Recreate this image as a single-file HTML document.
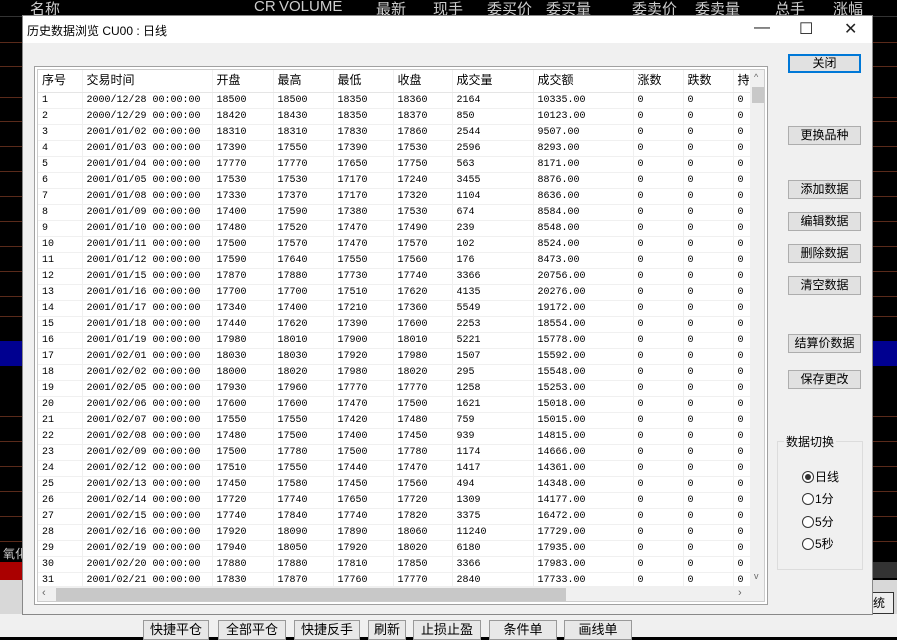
<!DOCTYPE html>
<html><head><meta charset="utf-8"><style>
*{margin:0;padding:0;box-sizing:border-box}
body{width:897px;height:637px;overflow:hidden;background:#000;position:relative;font-family:"Liberation Sans","Noto Sans CJK SC",sans-serif;font-size:12px}
.bgl{position:absolute;left:0;width:897px;height:1px;background:#5a2a1a}
.top{position:absolute;top:0;left:0;width:897px;height:17px;color:#ccc;font-size:15px}
.top span{position:absolute;top:-2px}
.dlg{position:absolute;left:22px;top:15px;width:851px;height:600px;background:#f0f0f0;border:1px solid #888}
.title{height:27px;background:#fff;position:relative;font-size:12px}
.title .t{position:absolute;left:4px;top:6px}
.tb{position:absolute;top:3px;font-size:16px;color:#222}
.frame{position:absolute;left:11px;top:50px;width:734px;height:539px;border:1px solid #a0a0a0;background:#fff}
.inner{position:absolute;left:2px;top:2px;width:728px;height:533px;border:1px solid #ccc;overflow:hidden;background:#fff}
table{border-collapse:collapse;table-layout:fixed;font-family:"Liberation Mono","Noto Sans CJK SC",monospace;font-size:10px;position:absolute;left:0;top:0}
td{height:16px;padding-left:4px;border-right:1px solid #f0f0f0;border-bottom:1px solid #f0f0f0;white-space:nowrap;overflow:hidden;line-height:15px}
tr.h td{height:22px;font-family:"Liberation Sans","Noto Sans CJK SC",sans-serif;font-size:12px;border-bottom:1px solid #e5e5e5}
.vs{position:absolute;left:712px;top:0;width:17px;height:516px;background:#f0f0f0}
.hs{position:absolute;left:0;top:516px;width:729px;height:17px;background:#f0f0f0}
.btn{position:absolute;left:765px;width:73px;height:19px;border:1px solid #adadad;background:#e1e1e1;text-align:center;font-size:12px;line-height:17px}
.grp{position:absolute;left:754px;top:425px;width:86px;height:129px;border:1px solid #dcdcdc}
.grp .l{position:absolute;left:6px;top:-9px;background:#f0f0f0;padding:0 2px;font-size:12px}
.rd{position:absolute;left:24px;font-size:12px}
.rd i{display:inline-block;width:12px;height:12px;border:1px solid #333;border-radius:50%;vertical-align:-2px;margin-right:1px;background:#fff;position:relative}
.rd i.on:after{content:"";position:absolute;left:2px;top:2px;width:6px;height:6px;border-radius:50%;background:#333}
.bb{position:absolute;top:620px;height:20px;border:1px solid #999;background:#e8e8e8;font-size:13px;text-align:center;line-height:18px}
</style></head><body>
<div class="bgl" style="top:16px;background:#333"></div>
<div class="bgl" style="top:42px"></div><div class="bgl" style="top:66px"></div><div class="bgl" style="top:97px"></div>
<div class="bgl" style="top:121px"></div><div class="bgl" style="top:146px"></div><div class="bgl" style="top:171px"></div>
<div class="bgl" style="top:196px"></div><div class="bgl" style="top:221px"></div><div class="bgl" style="top:246px"></div>
<div class="bgl" style="top:271px"></div><div class="bgl" style="top:296px"></div><div class="bgl" style="top:316px"></div>
<div style="position:absolute;left:0;top:341px;width:897px;height:25px;background:#000090"></div>
<div class="bgl" style="top:416px"></div><div class="bgl" style="top:441px"></div><div class="bgl" style="top:466px"></div>
<div class="bgl" style="top:491px"></div><div class="bgl" style="top:516px"></div><div class="bgl" style="top:541px"></div>
<div style="position:absolute;left:0;top:562px;width:22px;height:18px;background:#a00"></div>
<div style="position:absolute;left:872px;top:562px;width:25px;height:16px;background:#333"></div>
<div style="position:absolute;left:0;top:580px;width:897px;height:57px;background:#d8d8d8"></div>
<div style="position:absolute;left:0;top:614px;width:897px;height:23px;background:#f0f0f0"></div>
<div style="position:absolute;left:3px;top:545px;color:#ccc;font-size:12px">氧化</div>
<div style="position:absolute;left:872px;top:592px;width:22px;height:22px;border:1px solid #333;background:#eee;font-size:12px;line-height:20px">统</div>
<div class="top"><span style="left:30px">名称</span><span style="left:254px">CR</span><span style="left:279px">VOLUME</span><span style="left:376px">最新</span><span style="left:433px">现手</span><span style="left:487px">委买价</span><span style="left:546px">委买量</span><span style="left:632px">委卖价</span><span style="left:695px">委卖量</span><span style="left:775px">总手</span><span style="left:833px">涨幅</span></div>
<div class="bb" style="left:143px;width:66px">快捷平仓</div>
<div class="bb" style="left:218px;width:68px">全部平仓</div>
<div class="bb" style="left:294px;width:66px">快捷反手</div>
<div class="bb" style="left:368px;width:38px">刷新</div>
<div class="bb" style="left:413px;width:68px">止损止盈</div>
<div class="bb" style="left:489px;width:68px">条件单</div>
<div class="bb" style="left:564px;width:68px">画线单</div>
<div class="dlg">
<div class="title"><span class="t">历史数据浏览 CU00 : 日线</span><span class="tb" style="left:731px">—</span><span class="tb" style="left:776px">☐</span><span class="tb" style="left:821px">✕</span></div>
<div class="frame"><div class="inner">
<table>
<colgroup><col style="width:44px"><col style="width:130px"><col style="width:61px"><col style="width:60px"><col style="width:60px"><col style="width:59px"><col style="width:81px"><col style="width:100px"><col style="width:50px"><col style="width:50px"><col style="width:30px"></colgroup>
<tr class="h"><td>序号</td><td>交易时间</td><td>开盘</td><td>最高</td><td>最低</td><td>收盘</td><td>成交量</td><td>成交额</td><td>涨数</td><td>跌数</td><td>持</td></tr>
<tr><td>1</td><td>2000/12/28 00:00:00</td><td>18500</td><td>18500</td><td>18350</td><td>18360</td><td>2164</td><td>10335.00</td><td>0</td><td>0</td><td>0</td></tr>
<tr><td>2</td><td>2000/12/29 00:00:00</td><td>18420</td><td>18430</td><td>18350</td><td>18370</td><td>850</td><td>10123.00</td><td>0</td><td>0</td><td>0</td></tr>
<tr><td>3</td><td>2001/01/02 00:00:00</td><td>18310</td><td>18310</td><td>17830</td><td>17860</td><td>2544</td><td>9507.00</td><td>0</td><td>0</td><td>0</td></tr>
<tr><td>4</td><td>2001/01/03 00:00:00</td><td>17390</td><td>17550</td><td>17390</td><td>17530</td><td>2596</td><td>8293.00</td><td>0</td><td>0</td><td>0</td></tr>
<tr><td>5</td><td>2001/01/04 00:00:00</td><td>17770</td><td>17770</td><td>17650</td><td>17750</td><td>563</td><td>8171.00</td><td>0</td><td>0</td><td>0</td></tr>
<tr><td>6</td><td>2001/01/05 00:00:00</td><td>17530</td><td>17530</td><td>17170</td><td>17240</td><td>3455</td><td>8876.00</td><td>0</td><td>0</td><td>0</td></tr>
<tr><td>7</td><td>2001/01/08 00:00:00</td><td>17330</td><td>17370</td><td>17170</td><td>17320</td><td>1104</td><td>8636.00</td><td>0</td><td>0</td><td>0</td></tr>
<tr><td>8</td><td>2001/01/09 00:00:00</td><td>17400</td><td>17590</td><td>17380</td><td>17530</td><td>674</td><td>8584.00</td><td>0</td><td>0</td><td>0</td></tr>
<tr><td>9</td><td>2001/01/10 00:00:00</td><td>17480</td><td>17520</td><td>17470</td><td>17490</td><td>239</td><td>8548.00</td><td>0</td><td>0</td><td>0</td></tr>
<tr><td>10</td><td>2001/01/11 00:00:00</td><td>17500</td><td>17570</td><td>17470</td><td>17570</td><td>102</td><td>8524.00</td><td>0</td><td>0</td><td>0</td></tr>
<tr><td>11</td><td>2001/01/12 00:00:00</td><td>17590</td><td>17640</td><td>17550</td><td>17560</td><td>176</td><td>8473.00</td><td>0</td><td>0</td><td>0</td></tr>
<tr><td>12</td><td>2001/01/15 00:00:00</td><td>17870</td><td>17880</td><td>17730</td><td>17740</td><td>3366</td><td>20756.00</td><td>0</td><td>0</td><td>0</td></tr>
<tr><td>13</td><td>2001/01/16 00:00:00</td><td>17700</td><td>17700</td><td>17510</td><td>17620</td><td>4135</td><td>20276.00</td><td>0</td><td>0</td><td>0</td></tr>
<tr><td>14</td><td>2001/01/17 00:00:00</td><td>17340</td><td>17400</td><td>17210</td><td>17360</td><td>5549</td><td>19172.00</td><td>0</td><td>0</td><td>0</td></tr>
<tr><td>15</td><td>2001/01/18 00:00:00</td><td>17440</td><td>17620</td><td>17390</td><td>17600</td><td>2253</td><td>18554.00</td><td>0</td><td>0</td><td>0</td></tr>
<tr><td>16</td><td>2001/01/19 00:00:00</td><td>17980</td><td>18010</td><td>17900</td><td>18010</td><td>5221</td><td>15778.00</td><td>0</td><td>0</td><td>0</td></tr>
<tr><td>17</td><td>2001/02/01 00:00:00</td><td>18030</td><td>18030</td><td>17920</td><td>17980</td><td>1507</td><td>15592.00</td><td>0</td><td>0</td><td>0</td></tr>
<tr><td>18</td><td>2001/02/02 00:00:00</td><td>18000</td><td>18020</td><td>17980</td><td>18020</td><td>295</td><td>15548.00</td><td>0</td><td>0</td><td>0</td></tr>
<tr><td>19</td><td>2001/02/05 00:00:00</td><td>17930</td><td>17960</td><td>17770</td><td>17770</td><td>1258</td><td>15253.00</td><td>0</td><td>0</td><td>0</td></tr>
<tr><td>20</td><td>2001/02/06 00:00:00</td><td>17600</td><td>17600</td><td>17470</td><td>17500</td><td>1621</td><td>15018.00</td><td>0</td><td>0</td><td>0</td></tr>
<tr><td>21</td><td>2001/02/07 00:00:00</td><td>17550</td><td>17550</td><td>17420</td><td>17480</td><td>759</td><td>15015.00</td><td>0</td><td>0</td><td>0</td></tr>
<tr><td>22</td><td>2001/02/08 00:00:00</td><td>17480</td><td>17500</td><td>17400</td><td>17450</td><td>939</td><td>14815.00</td><td>0</td><td>0</td><td>0</td></tr>
<tr><td>23</td><td>2001/02/09 00:00:00</td><td>17500</td><td>17780</td><td>17500</td><td>17780</td><td>1174</td><td>14666.00</td><td>0</td><td>0</td><td>0</td></tr>
<tr><td>24</td><td>2001/02/12 00:00:00</td><td>17510</td><td>17550</td><td>17440</td><td>17470</td><td>1417</td><td>14361.00</td><td>0</td><td>0</td><td>0</td></tr>
<tr><td>25</td><td>2001/02/13 00:00:00</td><td>17450</td><td>17580</td><td>17450</td><td>17560</td><td>494</td><td>14348.00</td><td>0</td><td>0</td><td>0</td></tr>
<tr><td>26</td><td>2001/02/14 00:00:00</td><td>17720</td><td>17740</td><td>17650</td><td>17720</td><td>1309</td><td>14177.00</td><td>0</td><td>0</td><td>0</td></tr>
<tr><td>27</td><td>2001/02/15 00:00:00</td><td>17740</td><td>17840</td><td>17740</td><td>17820</td><td>3375</td><td>16472.00</td><td>0</td><td>0</td><td>0</td></tr>
<tr><td>28</td><td>2001/02/16 00:00:00</td><td>17920</td><td>18090</td><td>17890</td><td>18060</td><td>11240</td><td>17729.00</td><td>0</td><td>0</td><td>0</td></tr>
<tr><td>29</td><td>2001/02/19 00:00:00</td><td>17940</td><td>18050</td><td>17920</td><td>18020</td><td>6180</td><td>17935.00</td><td>0</td><td>0</td><td>0</td></tr>
<tr><td>30</td><td>2001/02/20 00:00:00</td><td>17880</td><td>17880</td><td>17810</td><td>17850</td><td>3366</td><td>17983.00</td><td>0</td><td>0</td><td>0</td></tr>
<tr><td>31</td><td>2001/02/21 00:00:00</td><td>17830</td><td>17870</td><td>17760</td><td>17770</td><td>2840</td><td>17733.00</td><td>0</td><td>0</td><td>0</td></tr>
</table>
<div class="vs"><div style="position:absolute;left:4px;top:2px;font-size:9px;color:#666">^</div><div style="position:absolute;left:2px;top:17px;width:13px;height:16px;background:#c8c8c8"></div><div style="position:absolute;left:4px;top:501px;font-size:9px;color:#666">v</div></div>
<div class="hs"><div style="position:absolute;left:4px;top:1px;font-size:11px;color:#666">‹</div><div style="position:absolute;left:18px;top:2px;width:510px;height:13px;background:#c8c8c8"></div><div style="position:absolute;left:700px;top:1px;font-size:11px;color:#666">›</div></div>
</div></div>
<div class="btn" style="top:38px;border:2px solid #0078d7;line-height:15px">关闭</div>
<div class="btn" style="top:110px">更换品种</div>
<div class="btn" style="top:164px">添加数据</div>
<div class="btn" style="top:196px">编辑数据</div>
<div class="btn" style="top:228px">删除数据</div>
<div class="btn" style="top:260px">清空数据</div>
<div class="btn" style="top:318px">结算价数据</div>
<div class="btn" style="top:354px">保存更改</div>
<div class="grp"><span class="l">数据切换</span>
<div class="rd" style="top:26px"><i class="on"></i>日线</div>
<div class="rd" style="top:48px"><i></i>1分</div>
<div class="rd" style="top:71px"><i></i>5分</div>
<div class="rd" style="top:93px"><i></i>5秒</div>
</div>
</div>
</body></html>
